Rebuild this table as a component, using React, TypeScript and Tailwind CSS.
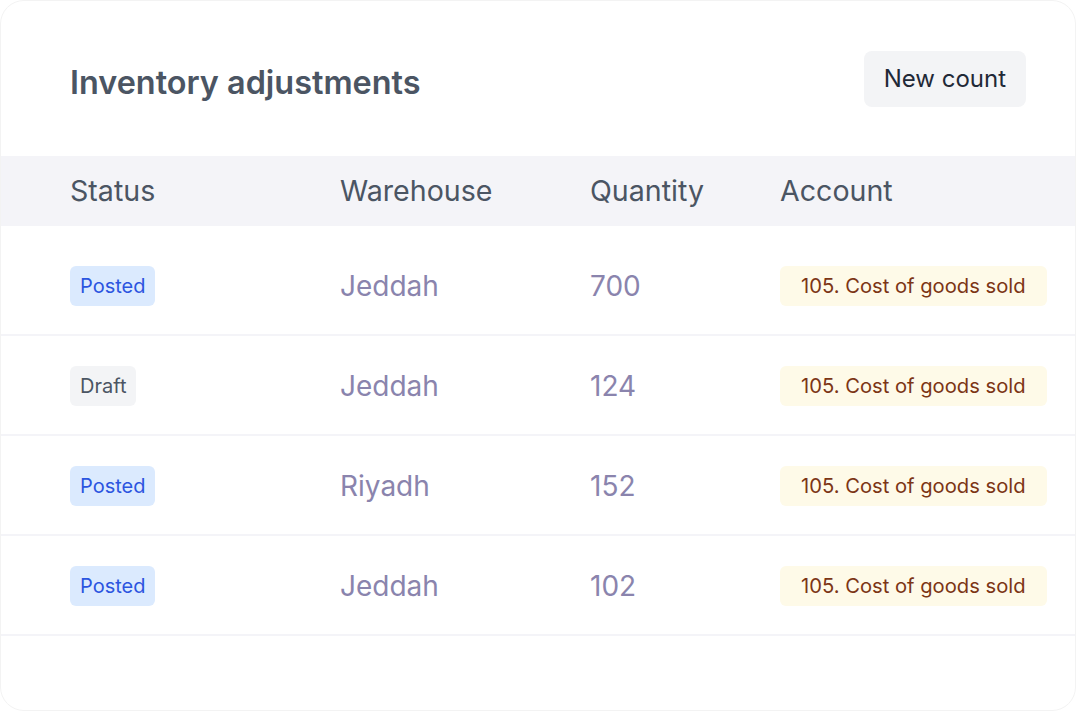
const rows = [
  { status: 'Posted', warehouse: 'Jeddah', quantity: 700, account: '105. Cost of goods sold' },
  { status: 'Draft', warehouse: 'Jeddah', quantity: 124, account: '105. Cost of goods sold' },
  { status: 'Posted', warehouse: 'Riyadh', quantity: 152, account: '105. Cost of goods sold' },
  { status: 'Posted', warehouse: 'Jeddah', quantity: 102, account: '105. Cost of goods sold' },
]

function StatusBadge({ status }: { status: string }) {
  const posted = status === 'Posted'
  return (
    <span
      className={`inline-flex h-10 items-center rounded-md px-[10px] text-[20px] ${
        posted ? 'bg-[#dbeafe] text-[#2b55e0]' : 'bg-[#f3f4f6] text-[#4b5563]'
      }`}
    >
      {status}
    </span>
  )
}

export default function App() {
  return (
    <div
      className="h-[711px] w-[1076px] overflow-hidden bg-white"
      style={{ fontFamily: 'Inter, "Noto Sans", sans-serif' }}
    >
      <div className="flex h-full flex-col rounded-[24px] border border-[#f3f3f3] bg-white">
        {/* Top bar */}
        <div className="flex items-start justify-between pl-[69px] pr-[49px] pt-[50px]">
          <h1 className="mt-[14px] text-[32.4px] font-semibold leading-9 text-[#4b5563]">
            Inventory adjustments
          </h1>
          <button className="h-14 rounded-lg bg-[#f3f4f6] px-5 text-[24px] text-[#1f2937]">
            New count
          </button>
        </div>

        {/* Table header */}
        <div className="mt-[49px] grid h-[70px] grid-cols-[270px_250px_190px_1fr] items-center bg-[#f4f4f8] pl-[69px] text-[28.6px] text-[#4b5563]">
          <div>Status</div>
          <div>Warehouse</div>
          <div>Quantity</div>
          <div>Account</div>
        </div>

        {/* Rows */}
        <div className="mt-[10px]">
          {rows.map((row, i) => (
            <div
              key={i}
              className="grid h-[100px] grid-cols-[270px_250px_190px_1fr] items-center border-b-2 border-[#f4f4f8] pl-[69px] pt-[2px]"
            >
              <div>
                <StatusBadge status={row.status} />
              </div>
              <div className="text-[28px] text-[#8a84ad]">{row.warehouse}</div>
              <div className="text-[28px] text-[#8a84ad]">{row.quantity}</div>
              <div>
                <span className="inline-flex h-10 items-center rounded-md bg-[#fefae8] px-[21px] text-[20.2px] text-[#7c3515]">
                  {row.account}
                </span>
              </div>
            </div>
          ))}
        </div>
      </div>
    </div>
  )
}
